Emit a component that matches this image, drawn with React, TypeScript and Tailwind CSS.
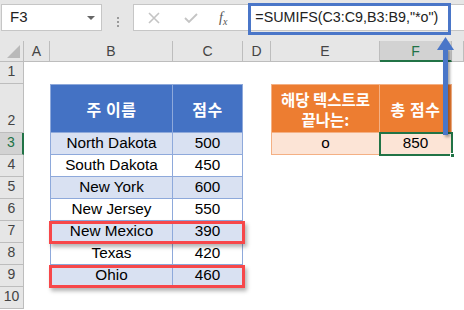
import type { ReactNode } from 'react';

const cols = ['A', 'B', 'C', 'D', 'E', 'F', ''];
const rows = [
  { n: 1, h: 'h-[22px]' },
  { n: 2, h: 'h-[49px]' },
  { n: 3, h: 'h-[22px]' },
  { n: 4, h: 'h-[22px]' },
  { n: 5, h: 'h-[22px]' },
  { n: 6, h: 'h-[22px]' },
  { n: 7, h: 'h-[22px]' },
  { n: 8, h: 'h-[22px]' },
  { n: 9, h: 'h-[22px]' },
  { n: 10, h: 'h-[22px]' },
];

const states = [
  ['North Dakota', '500'],
  ['South Dakota', '450'],
  ['New York', '600'],
  ['New Jersey', '550'],
  ['New Mexico', '390'],
  ['Texas', '420'],
  ['Ohio', '460'],
];

const font = "font-['Liberation_Sans','Noto_Sans_CJK_KR',sans-serif]";
const kr = "font-['Noto_Sans_CJK_KR',sans-serif]";

function Cell({ className = '', children }: { className?: string; children?: ReactNode }) {
  return <div className={`flex items-center justify-center ${className}`}>{children}</div>;
}

export default function App() {
  return (
    <div className={`relative w-[464px] h-[310px] overflow-hidden bg-white ${font} text-black`}>
      {/* formula bar */}
      <div className="flex h-[41px] bg-[#e6e6e6] pt-[4px] pl-[1px]">
        <div className="flex h-[27px] w-[101px] items-center justify-between border border-[#c6c6c6] bg-white pl-[8px] pr-[6px] text-[15px] text-[#222]">
          <span>F3</span>
          <span className="h-0 w-0 border-x-[4px] border-t-[4px] border-x-transparent border-t-[#666]" />
        </div>
        <div className="flex w-[31px] flex-col items-center justify-center gap-[2px] pb-[2px]">
          <span className="h-[2px] w-[2px] bg-[#9a9a9a]" />
          <span className="h-[2px] w-[2px] bg-[#9a9a9a]" />
          <span className="h-[2px] w-[2px] bg-[#9a9a9a]" />
        </div>
        <div className="flex h-[27px] flex-1 items-center border-y border-l border-[#c6c6c6] bg-white">
          <svg width="14" height="14" viewBox="0 0 14 14" className="ml-[13px]">
            <path d="M2 2 L12 12 M12 2 L2 12" stroke="#c4c4c4" strokeWidth="1.6" />
          </svg>
          <svg width="16" height="14" viewBox="0 0 16 14" className="ml-[22px]">
            <path d="M2 7 L6 11 L14 3" stroke="#c4c4c4" strokeWidth="1.8" fill="none" />
          </svg>
          <span className="ml-[20px] font-['Liberation_Serif',serif] text-[14px] italic text-[#555]">
            f<sub className="text-[10px]">x</sub>
          </span>
          <span className="ml-[28px] text-[14.3px] text-[#222]">=SUMIFS(C3:C9,B3:B9,"*o")</span>
        </div>
      </div>

      {/* sheet */}
      <div className="grid grid-cols-[24px_26px_123px_70px_28px_109px_72px_1fr]">
        {/* column headers */}
        <div className="relative h-[21px] border-r border-b border-[#bdbdbd] bg-[#e6e6e6]">
          <span className="absolute right-[3px] bottom-[3px] h-0 w-0 border-b-[13px] border-l-[13px] border-b-[#b9b9b9] border-l-transparent" />
        </div>
        {cols.map((c, k) => (
          <Cell
            key={k}
            className={
              c === 'F'
                ? 'h-[21px] border-r border-b-2 border-r-[#bdbdbd] border-b-[#217346] bg-[#d2d2d2] pt-[1px] text-[14px] text-[#217346]'
                : 'h-[21px] border-r border-b border-[#bdbdbd] bg-[#e6e6e6] text-[14px] text-[#444]'
            }
          >
            {c}
          </Cell>
        ))}

        {rows.map((r) => {
          const i = r.n - 3;
          const cells: ReactNode[] = [];
          cells.push(
            <div
              key={`h${r.n}`}
              className={`flex items-end justify-center pb-[1px] text-[14px] ${r.h} border-b ${
                r.n === 3
                  ? 'border-r-2 border-r-[#217346] border-b-[#bdbdbd] bg-[#d2d2d2] text-[#217346]'
                  : 'border-r border-[#bdbdbd] bg-[#e6e6e6] text-[#444]'
              }`}
            >
              {r.n}
            </div>,
          );
          cells.push(<div key={`a${r.n}`} className={r.h} />);
          if (r.n === 2) {
            cells.push(
              <Cell key="b2" className={`${kr} ${r.h} border border-[#8ea9db] bg-[#4472c4] text-[16px] font-bold tracking-[0.5px] text-white`}>
                주 이름
              </Cell>,
              <Cell key="c2" className={`${kr} ${r.h} border-y border-r border-[#8ea9db] bg-[#4472c4] text-[16px] font-bold tracking-[0.5px] text-white`}>
                점수
              </Cell>,
            );
          } else if (r.n >= 3 && r.n <= 9) {
            const bg = i % 2 === 0 ? 'bg-[#d9e1f2]' : 'bg-white';
            cells.push(
              <Cell key={`b${r.n}`} className={`${r.h} border-x border-b border-[#8ea9db] ${bg} text-[15.3px]`}>
                {states[i][0]}
              </Cell>,
              <Cell key={`c${r.n}`} className={`${r.h} border-r border-b border-[#8ea9db] ${bg} text-[15.3px]`}>
                {states[i][1]}
              </Cell>,
            );
          } else {
            cells.push(<div key={`b${r.n}`} className={r.h} />, <div key={`c${r.n}`} className={r.h} />);
          }
          cells.push(<div key={`d${r.n}`} className={r.h} />);
          if (r.n === 2) {
            cells.push(
              <Cell key="e2" className={`${kr} ${r.h} flex-col border border-[#f4b084] bg-[#ed7d31] text-[15.5px] leading-[20px] font-bold text-white`}>
                <span>해당 텍스트로</span>
                <span>끝나는:</span>
              </Cell>,
              <Cell key="f2" className={`${kr} ${r.h} border-y border-r border-[#f4b084] bg-[#ed7d31] text-[16px] font-bold tracking-[0.5px] text-white`}>
                총 점수
              </Cell>,
            );
          } else if (r.n === 3) {
            cells.push(
              <Cell key="e3" className={`${r.h} border-x border-b border-[#f4b084] bg-[#fce4d6] text-[15.3px]`}>
                o
              </Cell>,
              <Cell key="f3" className={`${r.h} border-r border-b border-[#f4b084] bg-[#fce4d6] text-[15.3px]`}>
                850
              </Cell>,
            );
          } else {
            cells.push(<div key={`e${r.n}`} className={r.h} />, <div key={`f${r.n}`} className={r.h} />);
          }
          cells.push(<div key={`g${r.n}`} className={r.h} />);
          return cells;
        })}
      </div>

      {/* formula highlight */}
      <div className="absolute left-[248px] top-[3px] h-[32px] w-[203px] border-[3px] border-[#4a76c8]" />

      {/* selected cell F3 */}
      <div className="absolute left-[379px] top-[132px] h-[24px] w-[74px] border-2 border-[#217346]" />
      <div className="absolute left-[450px] top-[153px] h-[5px] w-[5px] border border-white bg-[#217346]" />

      {/* arrow */}
      <div className="absolute left-[443px] top-[48px] h-[87px] w-[5px] bg-[#4a76c8] shadow-[2px_2px_3px_rgba(0,0,0,0.35)]" />
      <svg className="absolute left-[437px] top-[37px]" width="17" height="13" viewBox="0 0 17 13">
        <path d="M8.5 0 L17 13 L0 13 Z" fill="#4a76c8" />
      </svg>

      {/* red highlights */}
      <div className="absolute left-[49px] top-[221px] h-[23px] w-[196px] border-[3px] border-[#f7474a] shadow-[2px_3px_4px_rgba(0,0,0,0.3)]" />
      <div className="absolute left-[49px] top-[265px] h-[23px] w-[196px] border-[3px] border-[#f7474a] shadow-[2px_3px_4px_rgba(0,0,0,0.3)]" />
    </div>
  );
}
